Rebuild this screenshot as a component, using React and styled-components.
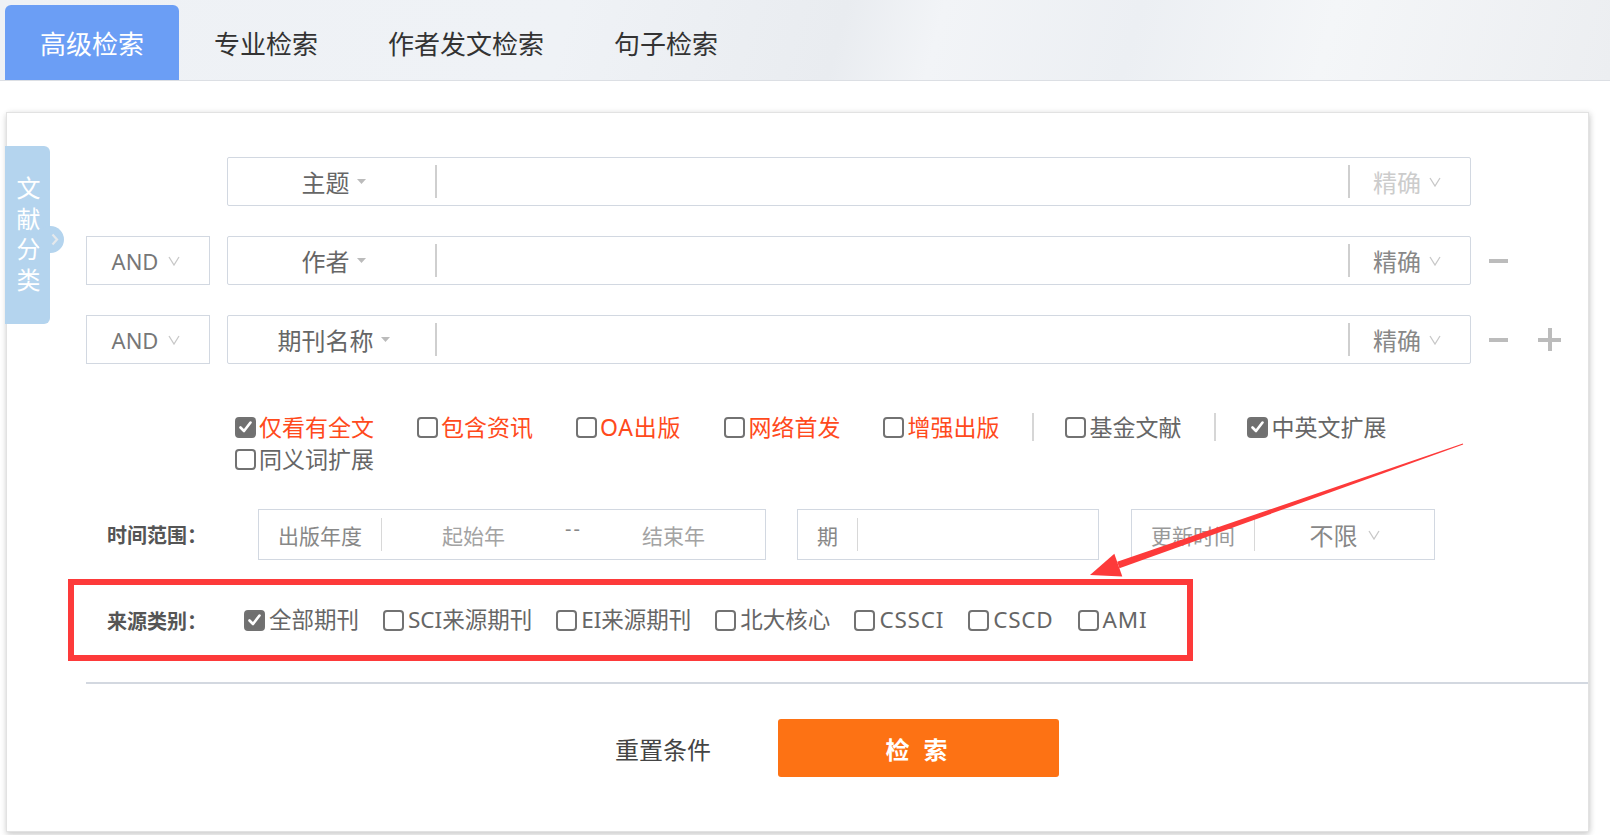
import React from 'react'
import styled, { createGlobalStyle } from 'styled-components'

const GlobalStyle = createGlobalStyle`
    html, body {
        margin: 0;
        padding: 0;
        background: #fff;
    }
    body {
        font-family: "Noto Sans", "Noto Sans CJK SC", sans-serif;
        color: #333;
    }
    * { box-sizing: border-box; }
`

const Page = styled.div`
    position: relative;
    width: 1610px;
    height: 835px;
    overflow: hidden;
    background: #fff;
`

const Header = styled.div`
    height: 81px;
    display: flex;
    align-items: flex-end;
    padding-left: 5px;
    border-bottom: 1px solid #dcdfe4;
    background: linear-gradient(105deg, #eef1f5 0%, #eff2f6 35%, #e9ecf0 52%, #f2f4f7 58%, #eceff3 70%, #f4f6f8 82%, #eceef1 100%);
`

const Tab = styled.div`
    height: 75px;
    padding: 0 35px;
    display: flex;
    align-items: center;
    font-size: 26px;
    line-height: 1;
    padding-top: 2px;
    color: ${p => (p.$active ? '#fff' : '#333')};
    background: ${p => (p.$active ? '#6b9ef5' : 'transparent')};
    border-radius: 6px 6px 0 0;
`

const Body = styled.div`
    padding: 31px 21px 0 6px;
`

const Card = styled.div`
    position: relative;
    height: 720px;
    border: 1px solid #e2e2e2;
    background: #fff;
    box-shadow: 0 3px 6px rgba(0, 0, 0, 0.16), 2px 0 6px rgba(0, 0, 0, 0.08);
    padding: 44px 0 0 79px;
`

const SideTab = styled.div`
    position: absolute;
    left: -2px;
    top: 33px;
    width: 45px;
    height: 178px;
    background: #b4d4ee;
    border-radius: 0 6px 6px 0;

    &::after {
        content: '';
        position: absolute;
        right: -14px;
        top: 80px;
        width: 27px;
        height: 27px;
        border-radius: 50%;
        background: #b4d4ee;
    }
`

const SideText = styled.div`
    position: absolute;
    left: 9px;
    top: 30px;
    writing-mode: vertical-rl;
    font-size: 24px;
    line-height: 26px;
    letter-spacing: 6.5px;
    color: #fff;
`

const SideChevron = styled.svg`
    position: absolute;
    right: -9px;
    top: 87px;
    z-index: 1;
`

const Row = styled.div`
    display: flex;
    align-items: center;
    height: 49px;
    margin-bottom: 30px;
`

const LogicBox = styled.div`
    width: 124px;
    height: 49px;
    margin-right: 17px;
    border: 1px solid ${p => (p.$empty ? 'transparent' : '#d2d8e1')};
    display: flex;
    align-items: center;
    justify-content: center;
    gap: 10px;
    font-size: 22px;
    color: #777;
    padding-right: 4px;
`

const FieldBox = styled.div`
    width: 1244px;
    height: 49px;
    border: 1px solid #d2d8e1;
    border-radius: 2px;
    display: flex;
    align-items: center;
`

const FieldSelect = styled.div`
    width: 209px;
    height: 33px;
    border-right: 2px solid #cfcfcf;
    display: flex;
    align-items: center;
    justify-content: center;
    gap: 7px;
    font-size: 24px;
    color: #666;
    padding-left: 4px;
`

const FieldInput = styled.div`
    flex: 1;
`

const MatchSelect = styled.div`
    width: 122px;
    height: 33px;
    border-left: 2px solid #cfcfcf;
    display: flex;
    align-items: center;
    gap: 8px;
    padding-left: 23px;
    font-size: 24px;
    color: ${p => (p.$muted ? '#cccccc' : '#888')};
`

const Actions = styled.div`
    display: flex;
    align-items: center;
    gap: 30px;
    margin-left: 18px;
`

const Minus = styled.div`
    width: 19px;
    height: 4px;
    background: #bcbcbc;
`

const Plus = styled.div`
    position: relative;
    width: 23px;
    height: 23px;

    &::before, &::after {
        content: '';
        position: absolute;
        background: #bcbcbc;
    }
    &::before { left: 0; top: 10px; width: 23px; height: 4px; }
    &::after { left: 10px; top: 0; width: 4px; height: 23px; }
`

const Options = styled.div`
    display: flex;
    flex-wrap: wrap;
    align-items: center;
    width: 1240px;
    margin: 47px 0 0 149px;
`

const Option = styled.label`
    display: flex;
    align-items: center;
    height: 32px;
    gap: ${p => (p.$tight ? 4 : 3)}px;
    margin-right: ${p => (p.$tight ? '24px' : '43px')};
    font-size: ${p => p.$size || 23}px;
    line-height: 1;
    letter-spacing: ${p => (p.$latin ? '0.8px' : '0')};
    color: ${p => (p.$red ? '#ff4a1c' : '#666')};
`

const Box = styled.span`
    width: ${p => p.$size || 21}px;
    height: ${p => p.$size || 21}px;
    border: 2px solid #727272;
    border-radius: 4px;
    background: ${p => (p.$checked ? '#707070' : '#fff')};
    display: inline-flex;
    align-items: center;
    justify-content: center;
    flex-shrink: 0;
`

const Sep = styled.span`
    width: 2px;
    height: 28px;
    background: #d6d6d6;
    margin: 0 31px 0 -10px;
`

const FilterRow = styled.div`
    display: flex;
    align-items: center;
    padding-left: 21px;
    height: ${p => p.$h}px;
    margin-top: ${p => p.$mt}px;
`

const FilterLabel = styled.div`
    width: ${p => p.$w}px;
    font-size: 20px;
    font-weight: 700;
    color: #555;
    flex-shrink: 0;
`

const RangeBox = styled.div`
    width: ${p => p.$w}px;
    height: 51px;
    margin-right: ${p => p.$mr || 0}px;
    border: 1px solid #d2d8e1;
    display: flex;
    align-items: center;
    font-size: 21px;
    color: #888;
`

const RangeLabel = styled.div`
    height: 33px;
    padding: 0 19px;
    border-right: 1px solid #d8d8d8;
    display: flex;
    align-items: center;
    color: ${p => (p.$light ? '#999' : '#888')};
`

const RangeInput = styled.div`
    flex: 1;
    text-align: center;
    color: #a3a3a3;
`

const Dash = styled.div`
    color: #888;
    font-size: 20px;
    letter-spacing: 2px;
    transform: translateY(-6px);
`

const RangeSelect = styled.div`
    flex: 1;
    display: flex;
    align-items: center;
    justify-content: center;
    gap: 10px;
    font-size: 24px;
    color: #888;
`

const Divider = styled.div`
    height: 2px;
    background: #d3d8e0;
    margin-top: 42px;
`

const ButtonRow = styled.div`
    display: flex;
    align-items: center;
    justify-content: center;
    gap: 67px;
    margin-top: 35px;
`

const ResetLink = styled.div`
    font-size: 24px;
    color: #444;
`

const SearchButton = styled.div`
    width: 281px;
    height: 58px;
    border-radius: 3px;
    background: #fd7214;
    color: #fff;
    font-size: 24px;
    font-weight: 700;
    letter-spacing: 4px;
    display: flex;
    align-items: center;
    justify-content: center;
`

const Highlight = styled.div`
    position: absolute;
    left: 61px;
    top: 466px;
    width: 1125px;
    height: 82px;
    border: 6px solid #fd3a3a;
    pointer-events: none;
`

const ArrowLayer = styled.svg`
    position: absolute;
    left: 0;
    top: 0;
    pointer-events: none;
`

const Vee = ({ color = '#c8c8c8' }) => (
    <svg width="12" height="10" viewBox="0 0 12 10">
        <polyline points="1,1 6,9 11,1" fill="none" stroke={color} strokeWidth="1.3" />
    </svg>
)

const Caret = () => (
    <svg width="9" height="5" viewBox="0 0 9 5">
        <polygon points="0,0 9,0 4.5,5" fill="#bbb" />
    </svg>
)

const Check = ({ checked, size }) => (
    <Box $checked={checked} $size={size}>
        {checked && (
            <svg width="13" height="12" viewBox="0 0 13 12">
                <polyline points="1.5,6.5 5,10 11.5,1.5" fill="none" stroke="#fff" strokeWidth="2.6" strokeLinecap="round" strokeLinejoin="round" />
            </svg>
        )}
    </Box>
)

const fields = [
    { logic: null, name: '主题', muted: true, actions: [] },
    { logic: 'AND', name: '作者', muted: false, actions: ['minus'] },
    { logic: 'AND', name: '期刊名称', muted: false, actions: ['minus', 'plus'] },
]

const sources = ['全部期刊', 'SCI来源期刊', 'EI来源期刊', '北大核心', 'CSSCI', 'CSCD', 'AMI']

// tapered arrow: thin tail at (1463,444), head tip at (1090,575)
const arrowShape = () => {
    const sx = 1463, sy = 444, tx = 1090, ty = 575
    const len = Math.hypot(tx - sx, ty - sy)
    const ux = (tx - sx) / len, uy = (ty - sy) / len
    const px = -uy, py = ux
    const head = 30
    const bx = tx - ux * head, by = ty - uy * head
    const shaft = [
        [sx + px * 0.5, sy + py * 0.5],
        [bx + px * 3.5, by + py * 3.5],
        [bx - px * 3.5, by - py * 3.5],
        [sx - px * 0.5, sy - py * 0.5],
    ]
    const tip = [
        [tx, ty],
        [bx + px * 12, by + py * 12],
        [bx - px * 12, by - py * 12],
    ]
    const pts = a => a.map(p => p.join(',')).join(' ')
    return { shaft: pts(shaft), tip: pts(tip) }
}

const App = () => {
    const arrow = arrowShape()
    return (
        <Page>
            <GlobalStyle />
            <Header>
                <Tab $active>高级检索</Tab>
                <Tab>专业检索</Tab>
                <Tab>作者发文检索</Tab>
                <Tab>句子检索</Tab>
            </Header>
            <Body>
                <Card>
                    <SideTab>
                        <SideText>文献分类</SideText>
                        <SideChevron width="8" height="13" viewBox="0 0 8 13">
                            <polyline points="1.5,1.5 6,6.5 1.5,11.5" fill="none" stroke="#e4e8ec" strokeWidth="2.2" />
                        </SideChevron>
                    </SideTab>

                    {fields.map(f => (
                        <Row key={f.name}>
                            <LogicBox $empty={!f.logic}>
                                {f.logic && <>{f.logic}<Vee /></>}
                            </LogicBox>
                            <FieldBox>
                                <FieldSelect>{f.name}<Caret /></FieldSelect>
                                <FieldInput />
                                <MatchSelect $muted={f.muted}>精确<Vee /></MatchSelect>
                            </FieldBox>
                            <Actions>
                                {f.actions.map(a => (a === 'minus' ? <Minus key={a} /> : <Plus key={a} />))}
                            </Actions>
                        </Row>
                    ))}

                    <Options>
                        <Option $red><Check checked />仅看有全文</Option>
                        <Option $red><Check />包含资讯</Option>
                        <Option $red $latin><Check />OA出版</Option>
                        <Option $red><Check />网络首发</Option>
                        <Option $red><Check />增强出版</Option>
                        <Sep />
                        <Option><Check />基金文献</Option>
                        <Sep />
                        <Option><Check checked />中英文扩展</Option>
                        <Option><Check />同义词扩展</Option>
                    </Options>

                    <FilterRow $h={51} $mt={34}>
                        <FilterLabel $w={151}>时间范围：</FilterLabel>
                        <RangeBox $w={508} $mr={31}>
                            <RangeLabel>出版年度</RangeLabel>
                            <RangeInput>起始年</RangeInput>
                            <Dash>--</Dash>
                            <RangeInput>结束年</RangeInput>
                        </RangeBox>
                        <RangeBox $w={302} $mr={32}>
                            <RangeLabel>期</RangeLabel>
                        </RangeBox>
                        <RangeBox $w={304}>
                            <RangeLabel $light>更新时间</RangeLabel>
                            <RangeSelect>不限<Vee /></RangeSelect>
                        </RangeBox>
                    </FilterRow>

                    <FilterRow $h={40} $mt={40}>
                        <FilterLabel $w={137}>来源类别：</FilterLabel>
                        {sources.map((s, i) => (
                            <Option key={s} $tight $latin={/^[A-Z]+$/.test(s)} $size={22.5}>
                                <Check checked={i === 0} size={21} />{s}
                            </Option>
                        ))}
                    </FilterRow>

                    <Divider />

                    <ButtonRow>
                        <ResetLink>重置条件</ResetLink>
                        <SearchButton>检 索</SearchButton>
                    </ButtonRow>

                    <Highlight />
                </Card>
            </Body>
            <ArrowLayer width="1610" height="835" viewBox="0 0 1610 835">
                <polygon points={arrow.shaft} fill="#fd3a3a" />
                <polygon points={arrow.tip} fill="#fd3a3a" />
            </ArrowLayer>
        </Page>
    )
}

export default App
